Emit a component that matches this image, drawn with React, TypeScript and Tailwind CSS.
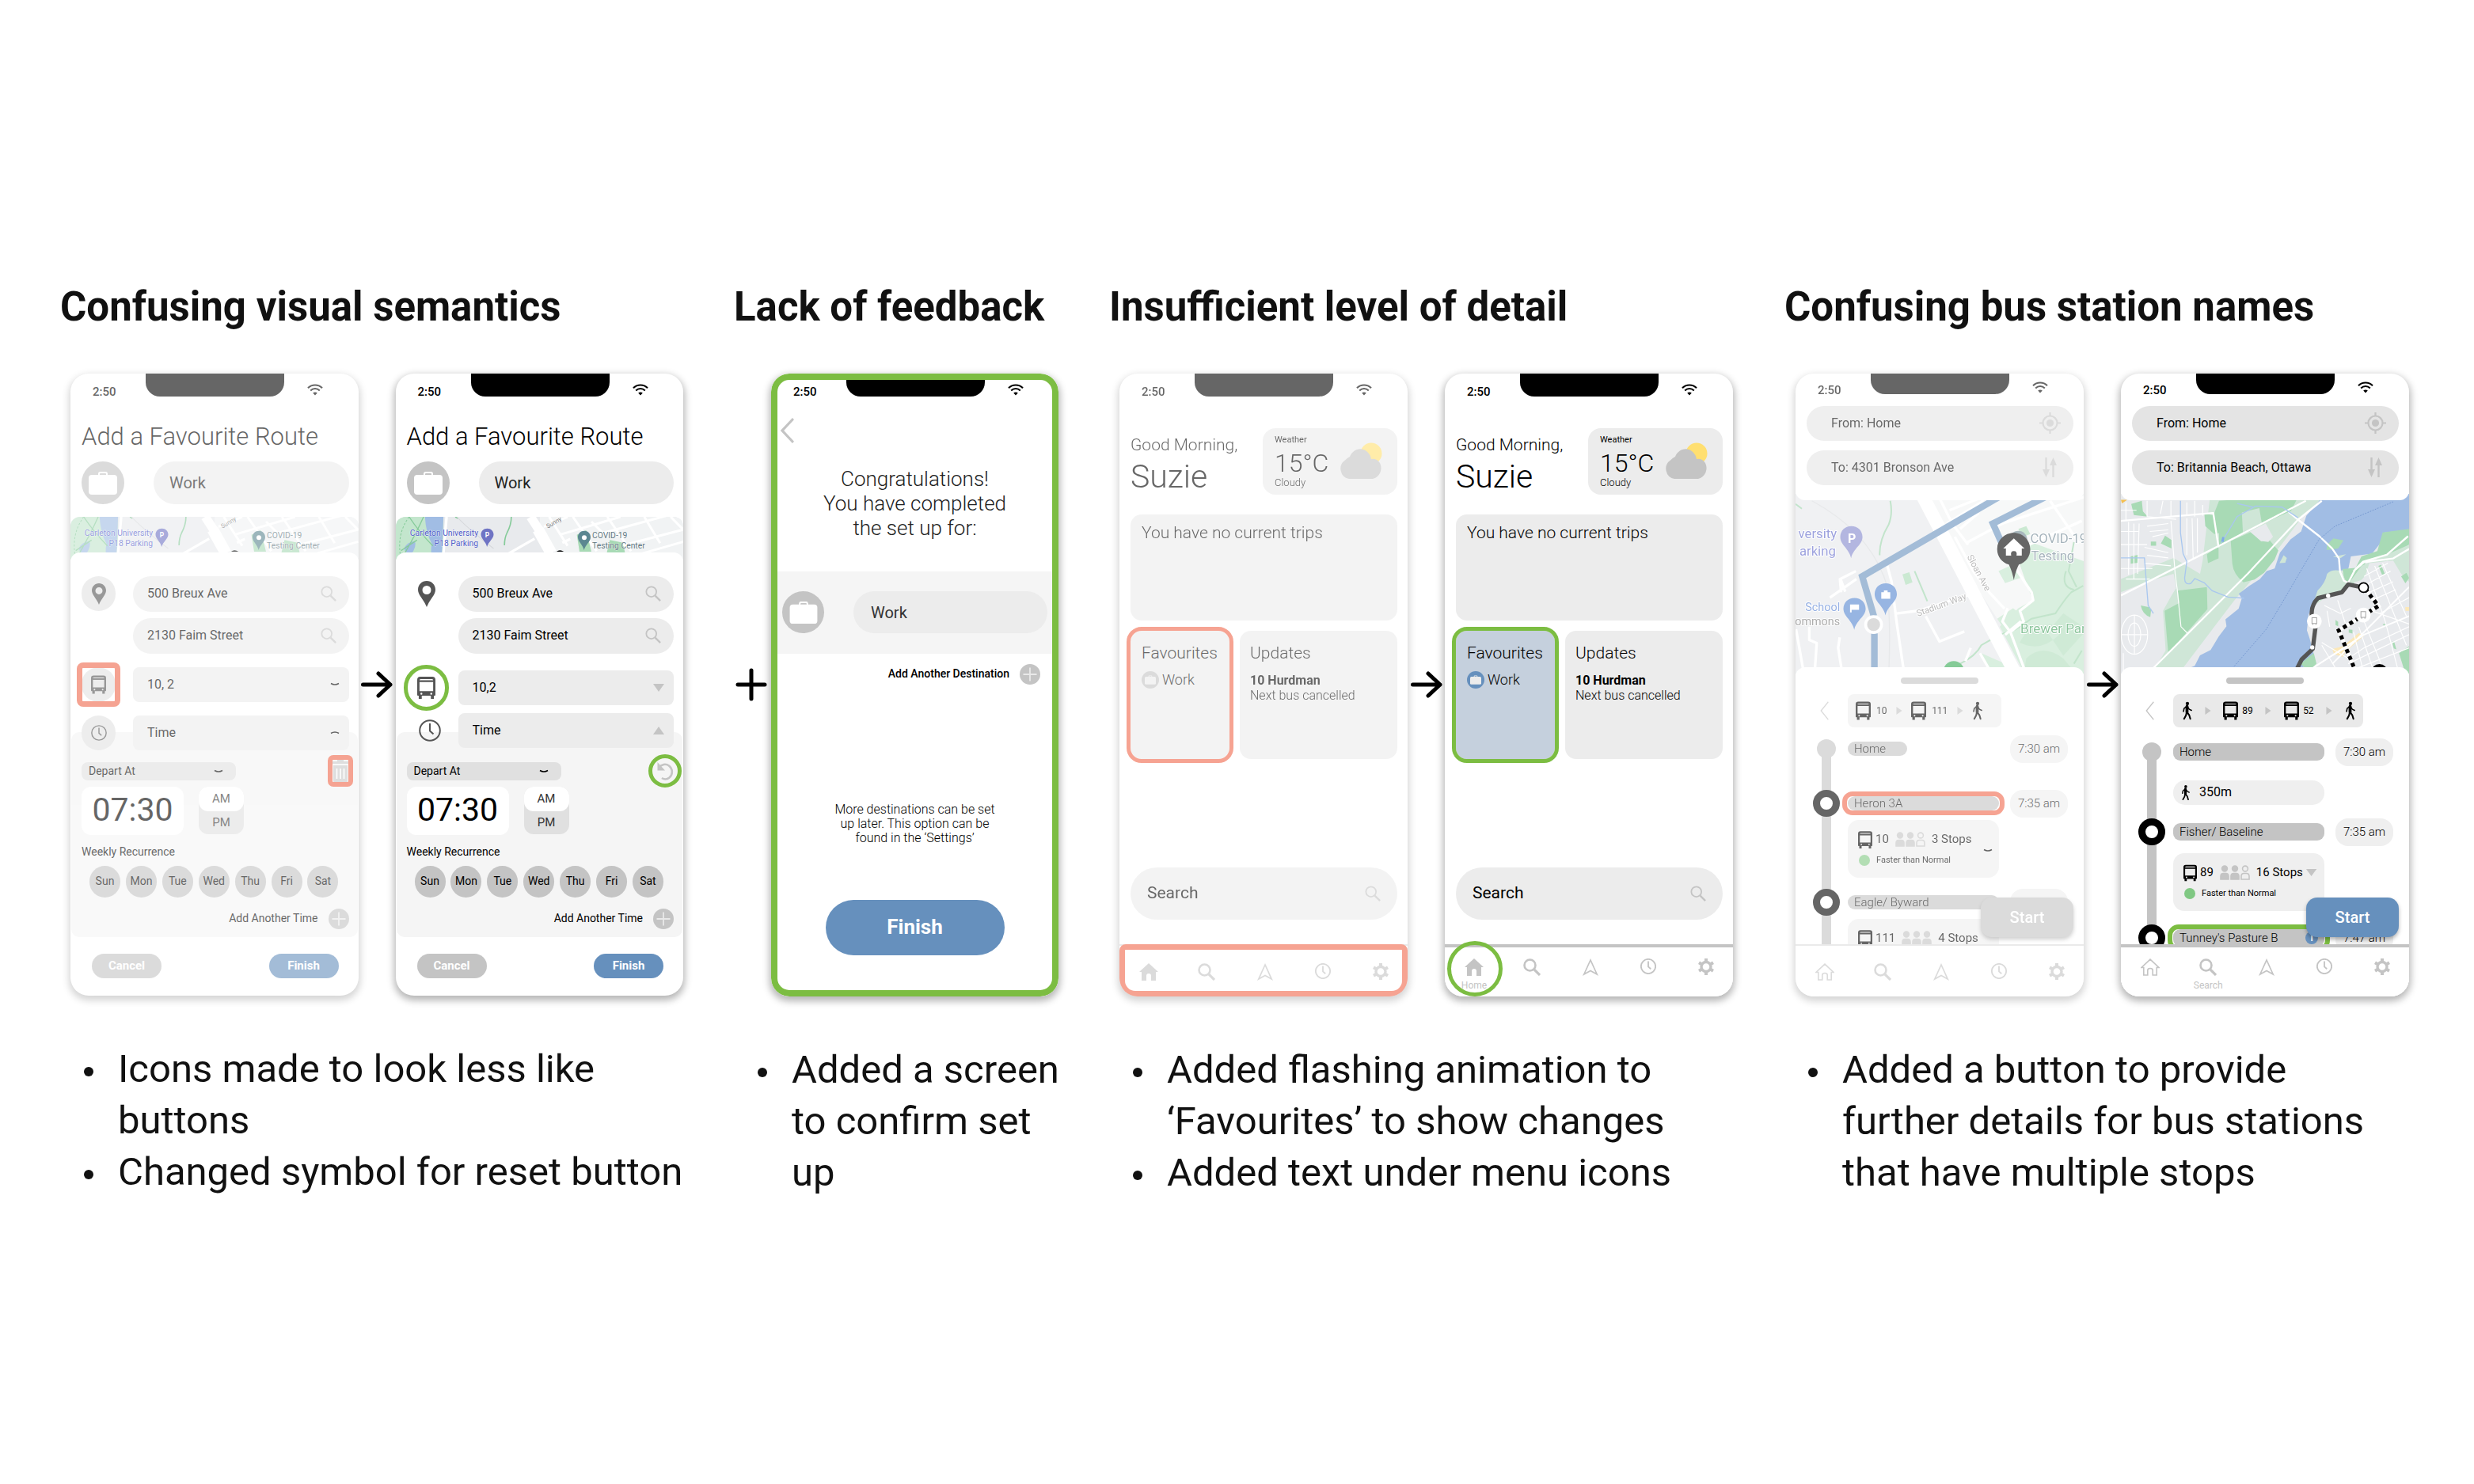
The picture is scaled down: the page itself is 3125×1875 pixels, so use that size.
import type { ReactNode } from "react";

/* ---------- icons ---------- */

function Wifi() {
  return (
    <svg className="h-[15px] w-[20px]" viewBox="0 0 20 15" fill="none" stroke="currentColor" strokeWidth="2.1">
      <path d="M1 5.2C6 .2 14 .2 19 5.2" />
      <path d="M4.2 8.4c3.3-3.2 8.3-3.2 11.6 0" />
      <path d="M10 14.6 7.2 11.6c1.6-1.5 4-1.5 5.6 0Z" fill="currentColor" stroke="none" />
    </svg>
  );
}

function Briefcase({ className }: { className: string }) {
  return (
    <svg className={className} viewBox="0 0 36 30">
      <path d="M12 6V3.5Q12 1 14.500 1h7Q24 1 24 3.500V6h-2V4q0-1-1-1h-6q-1 0-1 1v2Z" fill="currentColor" />
      <rect x="0" y="5" width="36" height="25" rx="4" fill="currentColor" />
    </svg>
  );
}

function SearchIcon({ className, thick = 2 }: { className: string; thick?: number }) {
  return (
    <svg className={className} viewBox="0 0 22 22" fill="none" stroke="currentColor">
      <circle cx="8.5" cy="8.500" r="7" strokeWidth={thick} />
      <path d="M13.800 13.800 21 21" strokeWidth={thick + 0.6} />
    </svg>
  );
}

function Pin({ className }: { className: string }) {
  return (
    <svg className={className} viewBox="0 0 22 33">
      <path
        fillRule="evenodd"
        fill="currentColor"
        d="M11 0C4.800 0 0 4.900 0 11c0 7 7 12 11 22 4-10 11-15 11-22C22 4.900 17.200 0 11 0Zm0 6a5.500 5.500 0 1 1 0 11 5.500 5.500 0 0 1 0-11Z"
      />
    </svg>
  );
}

function Bus({ className }: { className: string }) {
  return (
    <svg className={className} viewBox="0 0 24 29">
      <path
        fillRule="evenodd"
        fill="currentColor"
        d="M4 0h16q4 0 4 4v20q0 1-1 1h-1v4h-4v-4H6v4H2v-4H1q-1 0-1-1V4q0-4 4-4Zm1 3Q3 3 3 4.500h18Q21 3 19 3ZM3 7v12h18V7Zm2.500 14a1.300 1.300 0 1 0 0 2.600 1.300 1.300 0 0 0 0-2.600Zm13 0a1.300 1.300 0 1 0 0 2.600 1.300 1.300 0 0 0 0-2.600Z"
      />
    </svg>
  );
}

function Clock({ className, thick = 2 }: { className: string; thick?: number }) {
  return (
    <svg className={className} viewBox="0 0 28 28" fill="none" stroke="currentColor" strokeWidth={thick}>
      <circle cx="14" cy="14" r="12.800" />
      <path d="M14 5v9.500l4.500 4" />
    </svg>
  );
}

function Trash() {
  return (
    <svg className="h-[30px] w-[22px] text-[#c9c9c9]" viewBox="0 0 22 30">
      <path d="M1 3h6V1h8v2h6v3H1ZM2 8h18v19q0 3-3 3H5q-3 0-3-3Z" fill="currentColor" />
      <path d="M6.500 12v13M11 12v13M15.500 12v13" stroke="#fff" strokeWidth="1.600" />
    </svg>
  );
}

function Reset() {
  return (
    <svg className="h-[24px] w-[22px] text-[#c4c4c4]" viewBox="0 0 22 24" fill="none">
      <path d="M3 8c3.500-4.500 9-5.500 13-2.500 5 4 5 11 .5 15-3 2.500-6.500 2.500-9.500.5" stroke="currentColor" strokeWidth="2.600" />
      <path d="M1.500 1v10.500H11Z" fill="currentColor" />
    </svg>
  );
}

function ChevronLeft({ className, thick = 2 }: { className: string; thick?: number }) {
  return (
    <svg className={className} viewBox="0 0 17 30" preserveAspectRatio="none" fill="none" stroke="currentColor" strokeWidth={thick}>
      <path d="M16 1 2 15l14 14" />
    </svg>
  );
}

function Caret({ up = false }: { up?: boolean }) {
  return (
    <svg className="h-[5px] w-[12px]" viewBox="0 0 12 5" fill="none" stroke="currentColor" strokeWidth="1.500">
      <path d={up ? "M1 3.500Q6 .5 11 3.500" : "M1 1.500Q6 4.500 11 1.500"} />
    </svg>
  );
}

function Triangle({ dir, className }: { dir: "up" | "down" | "right"; className: string }) {
  const d = dir === "up" ? "M7 0 14 11H0Z" : dir === "down" ? "M0 0h14L7 11Z" : "M2 0v11l10-5.500Z";
  return (
    <svg className={className} viewBox="0 0 14 11" preserveAspectRatio="none">
      <path d={d} fill="currentColor" />
    </svg>
  );
}

function Walker({ className }: { className: string }) {
  return (
    <svg className={className} viewBox="0 0 14 24" fill="none" stroke="currentColor" strokeLinecap="round" strokeLinejoin="round">
      <circle cx="7.500" cy="2.300" r="2.300" fill="currentColor" stroke="none" />
      <path d="M7 6v8" strokeWidth="4" />
      <path d="M7.500 14.500 10 18l1.500 5M6.500 14.500 5.500 18.500 3 23" strokeWidth="2.200" />
      <path d="M6 6.500 3 9l-.8 4M8 7l2 3 3 1.500" strokeWidth="1.700" />
    </svg>
  );
}

function Person({ filled = true }: { filled?: boolean }) {
  return (
    <svg className="h-[19px] w-[12px] text-[#c4c4c4]" viewBox="0 0 12 19" fill={filled ? "currentColor" : "none"} stroke="currentColor" strokeWidth="1.600">
      <circle cx="6" cy="4.500" r="3.400" />
      <path d="M1 18v-4q0-3.500 3.500-3.500h3Q11 10.500 11 14v4Z" />
    </svg>
  );
}

function Plus() {
  return (
    <svg className="h-[26px] w-[26px]" viewBox="0 0 26 26">
      <circle cx="13" cy="13" r="13" fill="#c4c4c4" />
      <path d="M13 4.500v17M4.500 13h17" stroke="#e9e9e9" strokeWidth="1.800" />
    </svg>
  );
}

function Target() {
  return (
    <svg className="h-[27px] w-[27px] text-[#c4c4c4]" viewBox="0 0 27 27" fill="none" stroke="currentColor" strokeWidth="2.200">
      <circle cx="13.500" cy="13.500" r="9" />
      <circle cx="13.500" cy="13.500" r="4.600" fill="currentColor" stroke="none" />
      <path d="M13.500 0v5M13.500 22v5M0 13.500h5M22 13.500h5" />
    </svg>
  );
}

function Swap() {
  return (
    <svg className="mr-[5px] h-[25px] w-[18px] text-[#c4c4c4]" viewBox="0 0 18 25">
      <path d="M3.300 0h2.400v15H9L4.500 25 0 15h3.300ZM12.300 25h2.400V10H18L13.500 0 9 10h3.300Z" fill="currentColor" />
    </svg>
  );
}

function HomeIcon({ filled }: { filled: boolean }) {
  return filled ? (
    <svg className="h-[22px] w-[24px]" viewBox="0 0 24 22">
      <path d="M12 0 24 11h-3v11h-6v-6q0-3-3-3t-3 3v6H3V11H0Z" fill="currentColor" />
    </svg>
  ) : (
    <svg className="h-[22px] w-[24px]" viewBox="0 0 24 22" fill="none" stroke="currentColor" strokeWidth="1.600">
      <path d="M12 1.200 1 11.500h2.800V21h5v-6q0-2.500 3.200-2.500t3.200 2.500v6h5v-9.500H23Z" />
    </svg>
  );
}

function NavArrow() {
  return (
    <svg className="h-[22px] w-[20px]" viewBox="0 0 20 22" fill="none" stroke="currentColor" strokeWidth="1.700">
      <path d="M10 2 1.800 20 10 15.500 18.200 20Z" />
    </svg>
  );
}

function Gear() {
  return (
    <svg className="h-[21px] w-[20px]" viewBox="0 0 20 21" fill="none" stroke="currentColor">
      <circle cx="10" cy="10.500" r="6" strokeWidth="3.400" />
      <path d="M10 0v4M10 17v4M1 5.300l3.300 1.900M15.700 13.800l3.300 1.900M1 15.700l3.300-1.900M15.700 7.200 19 5.300" strokeWidth="4" />
    </svg>
  );
}

function WeatherIcon() {
  return (
    <svg className="h-[46px] w-[55px]" viewBox="0 0 55 46">
      <circle cx="41" cy="14" r="13.500" fill="#ffdf70" />
      <path d="M13 46a13 13 0 0 1-5-23.500A18 17 0 0 1 14 18C17 10 27 5 35 11q5 4 6 10 7-1 11 5a14 14 0 0 1-9 20Z" fill="#c4c4c4" />
    </svg>
  );
}

function ArrowRight() {
  return (
    <div className="flex w-[47px] shrink-0 items-center justify-center">
      <svg className="h-[34px] w-[40px]" viewBox="0 0 40 34" fill="none" stroke="#000" strokeWidth="5" strokeLinecap="round" strokeLinejoin="round">
        <path d="M2.500 17H37M22 3l15 14-15 14" />
      </svg>
    </div>
  );
}

/* ---------- maps ---------- */

function StripMap() {
  return (
    <svg className="block h-[54px] w-full rounded-t-[12px]" viewBox="20 42 1089 162" preserveAspectRatio="none" aria-hidden="true">
      <path fill="#e8eaed" d="M0 0h1128v220H0z" />
      <path fill="#c3e6cd" d="M20 42h180v162H20z" />
      <path fill="#a1bde4" d="M130 42h70l-6 162h-36q-8-30-2-60-22-40-26-102ZM52 160q10-22 40-26 8 20-14 50-26-4-26-24Z" />
      <path fill="none" stroke="#86cb9a" strokeWidth="4" d="M70 42q40 60 90 110M125 42Q95 110 40 204M100 130l-60 40" />
      <path fill="none" stroke="#86cb9a" strokeWidth="3" strokeDasharray="8 6" d="M70 42Q20 110 40 204" />
      <path fill="none" stroke="#86cb9a" strokeWidth="5" d="M457 42q0 30-16 60-10 20-10 48M245 42l10 6" />
      <path fill="#f1f3f4" d="M565 42h544v162H640l-75-100Z" />
      <path fill="#a8dab5" d="M705 110 740 92l20 82h-45ZM830 130l50 10 12 64h-80Z" />
      <path fill="none" stroke="#d5d7da" strokeWidth="3" d="M250 42q60 60 140 120" />
      <path fill="none" stroke="#fff" strokeWidth="10" d="M212 42l-14 162M545 125l-140 80M650 140l30-14" />
      <path fill="none" stroke="#fff" strokeWidth="34" d="m530 42 40 62" />
      <path fill="none" stroke="#fff" strokeWidth="44" d="m558 90 50 90" />
      <path
        fill="none"
        stroke="#fff"
        strokeWidth="9"
        d="m580 80 90-38M640 110l230-68M600 42l70 110M690 42l90 130M760 60l60 60M820 42l90 130M780 110 1109 20M880 150l229-60M960 42l60 100M1060 42l49 50M920 190l189-54"
      />
      <path fill="#6f74c4" d="M366 86c-14 0-24 10-24 23 0 17 18 26 23 47 6-21 25-30 25-47 0-13-10-23-24-23Z" />
      <text x="366" y="119" textAnchor="middle" fontSize="25" fontWeight="700" fill="#fff">P</text>
      <path fill="#5b8791" d="M733 95c-14 0-24 10-24 24 0 18 18 26 23 49 6-23 25-31 25-49 0-14-10-24-24-24Z" />
      <circle cx="733" cy="121" r="9" fill="#fff" />
      <g fontSize="31" stroke="#fff" strokeWidth="2" paintOrder="stroke">
        <text x="332" y="113" textAnchor="end" fill="#4f5bc8">Carleton University</text>
        <text x="332" y="152" textAnchor="end" fill="#4f5bc8">P18 Parking</text>
        <text x="763" y="122" fill="#5f7781">COVID-19</text>
        <text x="763" y="161" fill="#5f7781">Testing Center</text>
      </g>
      <text x="595" y="86" fontSize="23" fill="#777" transform="rotate(-30 595 86)">Sunny</text>
      <path fill="#000" d="M628 174q12-10 28 0Z" />
    </svg>
  );
}

function StreetMap() {
  return (
    <svg className="block h-[227px] w-full" viewBox="18 -3 1089 681" preserveAspectRatio="xMidYMid slice" aria-hidden="true">
      <path fill="#e6e8eb" d="M0-10h1128v700H0z" />
      <path fill="#f2f4f4" d="M470-10h658v400L860 560 780 470Z" />
      <path fill="#c0e4ca" d="m905 180 223 80v430H890L790 500l70-70 54-30-40-110-20-60Z" />
      <path fill="#c0e4ca" d="m785 290 55-25 30 50-60 20ZM720 600l90 40 20 40h-80ZM780 470l60-40 40 30-60 70Z" />
      <path fill="#a8dab5" d="M865 560q80 40 150-30l-30-40-90 20ZM1030 450l90 60-90 100-60-90ZM890 620q60-60 140 0l50 60H880Z" opacity=".7" />
      <path fill="#a8dab5" d="m422 302 26-8 12 38-26 10ZM860 130l30-10 15 30-30 12Z" />
      <path fill="none" stroke="#d8dadd" strokeWidth="4" d="M80 24q220 120 280 310 20 120 10 350" />
      <g fill="none" stroke="#9ad3a9" strokeWidth="6">
        <path d="M376 24q10 50-6 90-36 60-34 116M468 290l48 114M18 36l24 18M640 640q60-30 80-70l70-40 60-20 60-40 90-20q40-60 60-80l45-25M1070 180l-20 110 30 60M1040 290q-20 60 30 70M1100 590l-30 50" />
      </g>
      <g fill="none" stroke="#fff" strokeWidth="10" strokeLinejoin="round">
        <path d="M365 270l16 60 20 160 28 190M20 510l30 170M148 390l100-70M190 370l-4-50 60-30M188 320l18 48M400 450l80-10 200-62M510 460l52 96 94-38M70 500v50l28 12-8 118M185 540l-6 40 16 100" />
        <path d="M600 60l150-60M660 185l140-75 310-100M590 110 720 30 740 0M560 10l50 100 60 80M900 190l200-90M980 24l110 160M640 130l70-60M680 580l-20 50M715 600l40 70" />
        <path d="M620 160 690 290l60 80 58 62M850 280l60 90 6 30-50 40 14 40-50 40-30-40 20-50M870 480l-60 50M830 520l60 160" />
      </g>
      <path d="M490-10 850 680" stroke="#fff" strokeWidth="50" />
      <g fill="none" stroke="#6690bd" strokeWidth="25">
        <path d="M800 2 270 310l44 150M316 525v160M990-4 764 110l40 90" />
      </g>
      <circle cx="313" cy="492" r="30" fill="#c4c4c4" stroke="#fff" strokeWidth="11" />
      <path fill="#8186cc" d="M229 120c-24 0-42 17-42 41 0 30 34 44 41 80 7-36 43-50 43-80 0-24-18-41-42-41Z" />
      <text x="231" y="184" textAnchor="middle" fontSize="48" fontWeight="700" fill="#fff">P</text>
      <path fill="#5384cf" d="M359 336c-24 0-42 17-42 41 0 30 34 44 41 80 7-36 43-50 43-80 0-24-18-41-42-41ZM241 391c-24 0-42 17-42 41 0 30 34 44 41 80 7-36 43-50 43-80 0-24-18-41-42-41Z" />
      <path fill="#fff" d="M342 370h10v-7h14v7h10v24h-34ZM224 416h34v20h-28v10h-6Z" />
      <circle cx="616" cy="670" r="40" fill="#34a853" />
      <circle cx="860" cy="172" r="34" fill="#6f8791" />
      <path d="M843 145c-35 0-63 27-63 62 0 28 18 50 44 58 8 16 14 34 19 58 5-24 11-42 19-58 26-8 43-30 43-58 0-35-28-62-62-62Z" fill="#000" />
      <path d="m843 166 40 38h-10v27h-20q4-17-10-17t-10 17h-20v-27h-10Z" fill="#fff" />
      <g stroke="#fff" strokeWidth="6" strokeLinejoin="round" paintOrder="stroke">
        <g fontSize="50" fill="#5c64c8">
          <text x="174" y="165" textAnchor="end">versity</text>
          <text x="170" y="230" textAnchor="end">arking</text>
        </g>
        <g fontSize="50" fill="#6b8290">
          <text x="905" y="184">COVID-19</text>
          <text x="908" y="250">Testing</text>
        </g>
        <text x="186" y="442" textAnchor="end" fontSize="43" fill="#4f7bd0">School</text>
        <text x="186" y="494" textAnchor="end" fontSize="43" fill="#777">ommons</text>
        <text x="868" y="524" fontSize="51" fill="#42a05d">Brewer Park</text>
        <g fontSize="34" fill="#8d8d8d">
          <text x="666" y="236" transform="rotate(62 666 236)">Sloan Ave</text>
          <text x="480" y="462" transform="rotate(-20 480 462)">Stadium Way</text>
        </g>
      </g>
    </svg>
  );
}

function RiverMap() {
  return (
    <svg className="block h-[227px] w-full" viewBox="21 -3 1089 681" preserveAspectRatio="xMidYMid slice" aria-hidden="true">
      <path fill="#e8eaed" d="M0-10h1128v700H0z" />
      <path fill="#cfe6d7" d="M360-10h450l-100 90-90 120-170 200L230 690H130l60-100-10-150 50-90-10-50-100 30-100 40v-50l200-80 100 60 10-50Z" />
      <path fill="#a8dab5" d="M392 24 370 80l-34-10 4 50 34 30 18-4v46l60-30 30-20-4-74 66-16 10 60 110-50 30-60ZM436 176l76-34 40 36 30-6 34 40-14 34-40 50-36 26-42 10q-38-30-42-70ZM346 226l44-30v46l-40 18ZM236 364l110-14 2 84-80 90L200 600l-14-160 56-30ZM60 36l40-12 4 40 18 20-52-6ZM172 186l16-30 24 16v32ZM134 178h20v16h-20ZM58 234l28-6v30l-28 4ZM96 420l40 8-4 36q-30-10-36-44Z" />
      <path fill="#e8eaed" d="m508 140 60-30 28 50-18 20-28-4ZM150 350l80 4-40 60-60 20Z" />
      <path
        fill="#a1bde4"
        d="M800-10h310v144l-90 10-10 30-40 50-80 10-10 50-70 10-20 50-30 50-30 60-6 60 10 30 16 60-20 50-40 40H220l30-26 50-20 20-40 40-20 30-50 30-40-4-26 50-40 12-40-12-16 40-30 40-26 26-30 30-10 20-60 40-50 40-30 20-60Z"
      />
      <path fill="#a8dab5" d="m800 190 24-24 38 8-20 30-44 6ZM930 234l60-20 20-70 100-14v60l-60 40-100 20-20 40-30 46-34-10-8-44 50-4Z" />
      <path fill="#cfe6d7" d="M800 300q20-20 54-10l20 44-20 40-50 10-60 40 20-60q30-30 36-64ZM930 270l90-40 90-40v160l-60-100-90 10-20 60-60 20ZM620 260l16-30 12 10-6 18ZM822 236l50-10-20 14Z" />
      <path fill="#e8eaed" d="m770 420 40-30 80-20 60-70 10-30 70-20 80 80v350H690l60-80 16-80Z" />
      <path fill="#a8dab5" d="m994 270 10-4 14 34-10 4ZM882 510l14 2v14l-14-4ZM1046 556l8 2 8 28-10-4ZM1072 600l38-26v104l-20-20ZM832 474l10 8v16l-10-4ZM1080 310l20-14 10 20-14 20ZM700 640l50-40 10 40-30 30ZM1010 490h12l-6 8Z" />
      <path fill="#fce8b8" d="m820 584 40-10 60-50 20 10-70 60-10 20-34-10ZM1096 426h14v14h-14Z" />
      <g fill="none" stroke="#fff" strokeWidth="3.500">
        <path d="M40 30v70M120 24v60l110 10M20 60h60M210 24v60M180 24l-10 50M270 30v50M300 24v60M330 40v40M50 104v200M70 110v210M90 110l-6 190M20 190h100M20 140h70M120 120l80-10M130 140l70-6M140 160l60-14M110 200l90 20M120 230l80 10M110 260l100 10M270 90v140M290 90l4 150M310 90v130M20 280h120M40 320h90" />
        <ellipse cx="72" cy="530" rx="50" ry="74" />
        <ellipse cx="72" cy="530" rx="24" ry="44" />
        <path d="M72 456v148M22 530h100M30 600v90M210 100l16 200 8 60 14 140 26 26" />
        <path d="M950 280l70 200 50 190M980 270l80 200 40 100M1010 260l90 200M940 310l90-50M950 340l90-50M960 370l90-40M970 400l90-40M940 430l170 60M790 420l60 30 40-20M800 440l10 60M840 400l30 90M780 560l100 60 60-40 170-80M770 640l100-60M840 670l-60-100M940 680l-40-160M980 680l-60-180M1020 680l-80-200M880 640l230-110M880 670l230-90M1000 450l110-60" />
      </g>
      <g fill="none" stroke="#fff" strokeWidth="8" strokeLinejoin="round">
        <path strokeWidth="7" d="M21 382 400 190 720 24M140 660 500 300 690 96 780 24M655 66l36 30 80 62 48 46 26 38 4 50 14 34 20 10M880 334l26-50 30-30 90-26 80-70M900 290l40-34 110-14 60-36M20 100l350-30 20 130" />
        <path strokeWidth="6" d="M740 660l200-130 170-70M820 640l290-290" />
      </g>
      <g fill="none" stroke="#a9c7ef" strokeWidth="4">
        <path d="M246 24v120l10 80 14 30-8 60q-2 30 24 22l14-18 36 16 30 30 60 24 60 4M400 184l60-100 70-40 100 4 60 40M460 34l60 14M20 240h90l14 180 20 30" />
      </g>
      <path d="M404 160l8 2-2 18-10-2Z" fill="#7fa9e8" />
      <path d="M1050 28 830 120l-60 50-140 240-60 100-130 150" fill="none" stroke="#6b8fcb" strokeWidth="2.500" strokeDasharray="5 5" />
      <path d="M21 20h24l-20 14Z" fill="#f4bf4f" />
      <path d="M938 352l-58-12-24 30-50 12-40 10q-26 26-24 62l14 50-10 80-42 40-18 36" fill="none" stroke="#555" strokeWidth="16" strokeLinejoin="round" />
      <path d="M944 356l50 66-150 92 62 150" fill="none" stroke="#fff" strokeWidth="15" />
      <path d="M944 356l50 66-150 92 62 150" fill="none" stroke="#000" strokeWidth="15" strokeDasharray="15 13" />
      <circle cx="938" cy="352" r="18" fill="#fff" stroke="#000" strokeWidth="5" />
      <g fill="#fff">
        <circle cx="804" cy="383" r="8" />
        <circle cx="744" cy="578" r="8" />
        <circle cx="752" cy="479" r="28" />
        <circle cx="937" cy="456" r="28" />
      </g>
      <g fill="none" stroke="#a5a5a5" strokeWidth="3">
        <path d="M743 466h18v22h-18ZM746 488v5M758 488v5M928 443h18v22h-18ZM931 465v5M943 465v5" />
      </g>
      <circle cx="998" cy="672" r="31" fill="#000" />
    </svg>
  );
}

/* ---------- device frame ---------- */

function Phone({ faded = false, compact = false, children }: { faded?: boolean; compact?: boolean; children: ReactNode }) {
  return (
    <div
      className={
        "relative flex min-w-0 flex-1 flex-col overflow-hidden rounded-[23px] bg-white " +
        (faded
          ? "shadow-[0_4px_10px_2px_rgba(0,0,0,0.17)]"
          : "shadow-[0_4px_10px_2px_rgba(0,0,0,0.29)]")
      }
    >
      <div className={"flex flex-1 flex-col text-black " + (faded ? "opacity-60" : "")}>
        <div className="flex h-[32px] items-start pl-[28px] text-[15px] font-medium leading-[18px]">
          <span className={"w-[67px] " + (compact ? "mt-[12px]" : "mt-[14px]")}>2:50</span>
          <span className={"mr-[29px] w-[175px] rounded-b-[18px] bg-black " + (compact ? "h-[26px]" : "h-[29px]")} />
          <span className={compact ? "mt-[10px]" : "mt-[13px]"}>
            <Wifi />
          </span>
        </div>
        {children}
      </div>
    </div>
  );
}

function Field({ label, value, icon, className }: { label: string; value: string; icon?: ReactNode; className: string }) {
  return (
    <label className={"flex min-w-0 flex-1 items-center rounded-full " + className}>
      <input aria-label={label} defaultValue={value} className="w-0 min-w-0 flex-1 bg-transparent outline-none" />
      {icon}
    </label>
  );
}

function Dropdown({ label, value, icon }: { label: string; value: string; icon: ReactNode }) {
  return (
    <label className="flex h-[44px] min-w-0 flex-1 items-center rounded-[8px] bg-[#ececec] pl-[18px] pr-[12px] text-[16px] text-black">
      <select aria-label={label} defaultValue={value} className="w-0 min-w-0 flex-1 appearance-none bg-transparent outline-none">
        <option>{value}</option>
      </select>
      {icon}
    </label>
  );
}

/* ---------- favourite route screens ---------- */

function IconCell({ before, children, ring }: { before: boolean; children: ReactNode; ring?: ReactNode }) {
  return (
    <div className={before ? "mr-[22px] w-[43px] shrink-0" : "mr-[15px] w-[50px] shrink-0"}>
      <div className={"relative mx-auto flex h-[44px] w-[43px] items-center justify-center text-[#555] " + (before ? "rounded-full bg-[#e2e2e2]" : "")}>
        {children}
        {ring}
      </div>
    </div>
  );
}

function RoutePhone({ before = false }: { before?: boolean }) {
  return (
    <Phone faded={before}>
      <h3 className="mt-[28px] pl-[14px] text-[31px] font-light leading-[40px]">Add a Favourite Route</h3>
      <div className="mt-[11px] flex gap-[37px] pl-[14px] pr-[12px]">
        <div className="flex h-[54px] w-[54px] shrink-0 items-center justify-center rounded-full bg-[#c4c4c4] text-white">
          <Briefcase className="h-[30px] w-[36px]" />
        </div>
        <Field label="Route name" value="Work" className="h-[54px] bg-[#ececec] px-[20px] text-[20px] text-[#222]" />
      </div>
      <div className="mt-[16px]">
        <StripMap />
      </div>
      <div className="relative -mt-[9px] rounded-t-[12px] bg-white pl-[14px] pr-[12px] pt-[30px] text-[16px]">
        <div className="flex items-center">
          <IconCell before={before}>
            <Pin className={before ? "h-[27px] w-[18px]" : "h-[33px] w-[22px]"} />
          </IconCell>
          <Field label="Start address" value="500 Breux Ave" className="h-[45px] bg-[#ececec] pl-[18px] pr-[16px]" icon={<SearchIcon className="h-[20px] w-[20px] text-[#c4c4c4]" />} />
        </div>
        <div className="mt-[8px] flex pl-[65px]">
          <Field label="End address" value="2130 Faim Street" className="h-[45px] bg-[#ececec] pl-[18px] pr-[16px]" icon={<SearchIcon className="h-[20px] w-[20px] text-[#c4c4c4]" />} />
        </div>
        <div className={"flex items-center " + (before ? "mt-[17px]" : "mt-[21px]")}>
          <IconCell
            before={before}
            ring={
              before ? (
                <span className="absolute -inset-[6px] rounded-[8px] border-[7px] border-[#f0674a]" />
              ) : (
                <span className="absolute -inset-[7px] rounded-full border-[5px] border-[#7cbd42]" />
              )
            }
          >
            <Bus className={before ? "h-[24px] w-[19px]" : "h-[28px] w-[23px]"} />
          </IconCell>
          <Dropdown label="Bus lines" value={before ? "10, 2" : "10,2"} icon={before ? <Caret /> : <Triangle dir="down" className="h-[10px] w-[14px] text-[#c4c4c4]" />} />
        </div>
      </div>
      <div className={"mx-px rounded-[10px] bg-[#f5f5f5] pb-[10px] pl-[13px] pr-[11px] " + (before ? "mt-[38px]" : "mt-[34px]")}>
        <div className={"relative flex items-center " + (before ? "-mt-[21px]" : "-mt-[24px]")}>
          <IconCell before={before}>
            <Clock className={before ? "h-[20px] w-[20px]" : "ml-[9px] h-[28px] w-[28px]"} />
          </IconCell>
          <Dropdown label="Time section" value="Time" icon={before ? <Caret up /> : <Triangle dir="up" className="h-[10px] w-[14px] text-[#c4c4c4]" />} />
        </div>
        <div className={"flex h-[23px] items-center justify-between " + (before ? "mt-[15px]" : "mt-[18px]")}>
          <label className="flex h-[23px] w-[195px] items-center rounded-[8px] bg-[#e0e0e0] pl-[9px] pr-[16px] text-[14px]">
            <select aria-label="Departure type" className="w-0 min-w-0 flex-1 appearance-none bg-transparent outline-none">
              <option>Depart At</option>
            </select>
            <Caret />
          </label>
          {before ? (
            <button aria-label="Delete time" className="relative flex justify-center">
              <Trash />
              <span className="absolute -inset-[5px] rounded-[7px] border-[6px] border-[#f0674a]" />
            </button>
          ) : (
            <button aria-label="Reset time" className="relative flex h-[22px] w-[22px] items-center justify-center">
              <Reset />
              <span className="absolute -inset-[10px] rounded-full border-[5px] border-[#7cbd42]" />
            </button>
          )}
        </div>
        <div className="mt-[8px] flex gap-[19px]">
          <input aria-label="Departure time" defaultValue="07:30" className="h-[61px] w-[129px] rounded-[12px] bg-white text-center text-[41px] outline-none" />
          <div className="flex h-[60px] w-[57px] flex-col rounded-[12px] bg-[#e0e0e0] text-[15px] text-[#333]">
            <button className="h-[31px] rounded-[12px] bg-white">AM</button>
            <button className="h-[29px]">PM</button>
          </div>
        </div>
        <p className="mt-[12px] text-[14px] leading-[18px]">Weekly Recurrence</p>
        <div className="mt-[9px] flex justify-between pl-[10px] pr-[13px]">
          {["Sun", "Mon", "Tue", "Wed", "Thu", "Fri", "Sat"].map((d) => (
            <button key={d} className="h-[40px] w-[39px] rounded-full bg-[#c4c4c4] text-[14px]">
              {d}
            </button>
          ))}
        </div>
        <div className="mt-[14px] flex justify-end">
          <button className="flex h-[26px] items-center gap-[13px] text-[14px]">
            Add Another Time
            <Plus />
          </button>
        </div>
      </div>
      <div className="mt-[21px] flex justify-between pb-[22px] pl-[27px] pr-[25px] text-[15px] font-bold text-white">
        <button className="h-[31px] w-[88px] rounded-full bg-[#c4c4c4]">Cancel</button>
        <button className="h-[31px] w-[88px] rounded-full bg-[#6690bd]">Finish</button>
      </div>
    </Phone>
  );
}

/* ---------- confirmation screen ---------- */

function ConfirmPhone() {
  return (
    <Phone>
      <button aria-label="Back" className="ml-[12px] mt-[24px] w-[18px] text-[#c4c4c4]">
        <ChevronLeft className="h-[32px] w-[17px]" thick={3} />
      </button>
      <p className="mt-[30px] text-center text-[26px] font-light leading-[31px] text-[#222]">
        Congratulations!
        <br />
        You have completed
        <br />
        the set up for:
      </p>
      <div className="mt-[39px] flex h-[104px] items-center gap-[37px] bg-[#f5f5f5] px-[14px]">
        <div className="flex h-[53px] w-[53px] shrink-0 items-center justify-center rounded-full bg-[#c4c4c4] text-white">
          <Briefcase className="h-[29px] w-[36px]" />
        </div>
        <Field label="Destination name" value="Work" className="h-[53px] bg-[#ececec] px-[22px] text-[20px] text-[#333]" />
      </div>
      <div className="mt-[13px] flex justify-end pr-[23px]">
        <button className="flex items-center gap-[13px] text-[14px] font-medium">
          Add Another Destination
          <Plus />
        </button>
      </div>
      <p className="mt-[149px] text-center text-[16px] font-light leading-[18px]">
        More destinations can be set
        <br />
        up later. This option can be
        <br />
        found in the ‘Settings’
      </p>
      <button className="mx-auto mb-[52px] mt-[69px] h-[70px] w-[226px] rounded-full bg-[#6690bd] text-[26px] font-bold text-white">Finish</button>
      <span className="pointer-events-none absolute inset-0 rounded-[23px] border-[8px] border-[#7cbd42]" />
    </Phone>
  );
}

/* ---------- bottom navigation ---------- */

function NavBar({ active, label, faded = false, mark }: { active: "home" | "search"; label: boolean; faded?: boolean; mark?: "red" | "green" }) {
  const items: { name: string; icon: ReactNode }[] = [
    { name: "Home", icon: <HomeIcon filled={active === "home"} /> },
    { name: "Search", icon: <SearchIcon className="h-[22px] w-[22px]" thick={2.600} /> },
    { name: "Navigate", icon: <NavArrow /> },
    { name: "History", icon: <Clock className="h-[20px] w-[20px]" thick={2.600} /> },
    { name: "Settings", icon: <Gear /> },
  ];
  return (
    <nav className={"relative mt-auto flex h-[66px] justify-between bg-white pl-[15px] pr-[12px] text-[#c4c4c4] " + (faded ? "border-t-2 border-[#dcdcdc] pt-[22px]" : "border-t-4 border-[#c4c4c4] pt-[14px]")}>
      {items.map((it) => (
        <button key={it.name} aria-label={it.name} className="flex w-[44px] flex-col items-center gap-[5px] text-[12px] leading-[14px]">
          {it.icon}
          {label && it.name.toLowerCase() === active && <span>{it.name}</span>}
        </button>
      ))}
      {mark === "red" && <span className="absolute inset-0 -top-[2px] rounded-b-[20px] rounded-t-[8px] border-[7px] border-[#f0674a]" />}
      {mark === "green" && <span className="absolute -top-[8px] left-[3px] h-[70px] w-[70px] rounded-full border-[5px] border-[#7cbd42]" />}
    </nav>
  );
}

/* ---------- home screens ---------- */

function HomePhone({ before = false }: { before?: boolean }) {
  return (
    <Phone faded={before}>
      <div className="mt-[37px] flex justify-between pl-[14px] pr-[13px]">
        <div className="pt-[8px] font-light">
          <p className="text-[21px] leading-[26px]">Good Morning,</p>
          <p className="mt-[4px] text-[41px] leading-[46px]">Suzie</p>
        </div>
        <div className="flex h-[84px] w-[170px] justify-between rounded-[16px] bg-[#ececec] pl-[15px] pr-[19px] pt-[8px]">
          <div>
            <p className="text-[11px] leading-[14px]">Weather</p>
            <p className="mt-[5px] text-[32px] font-light leading-[34px]">15°C</p>
            <p className="text-[13px] font-light leading-[15px]">Cloudy</p>
          </div>
          <span className="mt-[10px]">
            <WeatherIcon />
          </span>
        </div>
      </div>
      <section className="ml-[14px] mr-[13px] mt-[25px] h-[134px] rounded-[14px] bg-[#ececec] pl-[14px] pt-[10px] text-[21px] font-light leading-[26px]">
        You have no current trips
      </section>
      <div className="ml-[14px] mr-[13px] mt-[13px] flex gap-[13px]">
        <section className={"relative h-[162px] w-[125px] rounded-[14px] pl-[14px] pt-[15px] " + (before ? "bg-[#ececec]" : "bg-[#c5d0dd]")}>
          <h3 className="text-[21px] font-light leading-[26px]">Favourites</h3>
          <button className="mt-[8px] flex items-center gap-[4px] text-[18px] font-light leading-[26px]">
            <span className={"flex h-[22px] w-[22px] items-center justify-center rounded-full text-[#ececec] " + (before ? "bg-[#c4c4c4]" : "bg-[#6690bd]")}>
              <Briefcase className="h-[12px] w-[14px]" />
            </span>
            Work
          </button>
          <span className={"absolute -inset-[5px] rounded-[19px] border-[5px] " + (before ? "border-[#f0674a]" : "border-[#7cbd42]")} />
        </section>
        <section className="h-[162px] flex-1 rounded-[14px] bg-[#ececec] pl-[13px] pt-[15px]">
          <h3 className="text-[21px] font-light leading-[26px]">Updates</h3>
          <p className="mt-[12px] text-[16px] font-bold leading-[19px]">10 Hurdman</p>
          <p className="text-[16px] font-light leading-[19px]">Next bus cancelled</p>
        </section>
      </div>
      <div className="mb-[31px] ml-[14px] mr-[13px] mt-[137px] flex">
        <Field label="Search" value="Search" className="h-[66px] bg-[#ececec] px-[21px] text-[21px]" icon={<SearchIcon className="h-[20px] w-[20px] text-[#c4c4c4]" />} />
      </div>
      <NavBar active="home" label={!before} faded={before} mark={before ? "red" : "green"} />
    </Phone>
  );
}

/* ---------- trip screens ---------- */

function Dot({ ring = false }: { ring?: boolean }) {
  return (
    <span className="flex w-[66px] shrink-0 justify-center pr-[12px]">
      <span className={ring ? "ml-[24px] h-[34px] w-[34px] shrink-0 rounded-full border-[9px] border-black bg-white" : "ml-[24px] h-[24px] w-[24px] shrink-0 rounded-full bg-[#c4c4c4]"} />
    </span>
  );
}

function TimePill({ children }: { children: ReactNode }) {
  return <span className="ml-[14px] flex h-[35px] w-[73px] shrink-0 items-center justify-center rounded-[16px] bg-[#efefef] text-[15px] font-light">{children}</span>;
}

function Stop({ name, time, ring = false, slim = false, short = false, className, children }: { name: string; time: string; ring?: boolean; slim?: boolean; short?: boolean; className: string; children?: ReactNode }) {
  return (
    <div className={"relative flex h-[35px] items-center " + className}>
      <Dot ring={ring} />
      <div className="w-[191px] shrink-0">
        <div className={"relative flex items-center rounded-[9px] bg-[#c4c4c4] pl-[8px] text-[15px] font-light " + (slim ? "h-[18px] " : "h-[22px] ") + (short ? "w-[75px]" : "w-full")}>
          {name}
          {children}
        </div>
      </div>
      <TimePill>{time}</TimePill>
    </div>
  );
}

function BusCard({ line, stops, before = false, busy = false, className }: { line: string; stops: string; before?: boolean; busy?: boolean; className: string }) {
  return (
    <div className={"relative ml-[66px] h-[73px] w-[191px] rounded-[14px] bg-[#efefef] pl-[13px] pr-[10px] pt-[13px] " + className}>
      <div className="flex h-[24px] items-center gap-[4px] text-[15px]">
        <Bus className="h-[22px] w-[18px]" />
        <span>{line}</span>
        <span className="mx-[4px] flex gap-px">
          <Person />
          <Person />
          <Person filled={busy} />
        </span>
        <span className="whitespace-nowrap">{stops}</span>
        {!before && <Triangle dir="down" className="ml-auto h-[9px] w-[14px] text-[#c4c4c4]" />}
      </div>
      {before && !busy && (
        <span className="absolute right-[8px] top-[36px]">
          <Caret />
        </span>
      )}
      <div className="mt-[5px] flex items-center gap-[8px] text-[11px] leading-[18px]">
        <span className="ml-px h-[14px] w-[14px] rounded-full bg-[#80c883]" />
        Faster than Normal
      </div>
    </div>
  );
}

function TripPhone({ before = false }: { before?: boolean }) {
  const arrow = <Triangle dir="right" className="h-[10px] w-[10px] text-[#c4c4c4]" />;
  const bus = <Bus className="h-[24px] w-[19px]" />;
  return (
    <Phone faded={before} compact>
      <div className="relative rounded-b-[12px] bg-white pb-[19px] pl-[14px] pr-[13px] pt-[9px] text-[16px]">
        <div className="flex">
          <Field label="From" value="From: Home" className="h-[44px] bg-[#e4e4e4] pl-[31px] pr-[16px]" icon={<Target />} />
        </div>
        <div className="mt-[12px] flex">
          <Field label="To" value={before ? "To: 4301 Bronson Ave" : "To: Britannia Beach, Ottawa"} className="h-[44px] bg-[#e4e4e4] pl-[31px] pr-[16px]" icon={<Swap />} />
        </div>
      </div>
      <div className="-mt-[8px]">{before ? <StreetMap /> : <RiverMap />}</div>
      <div className="relative -mt-[8px] flex flex-1 flex-col rounded-t-[12px] bg-white pt-[13px]">
        <span className="mx-auto h-[8px] w-[98px] rounded-full bg-[#c4c4c4]" />
        <div className="mt-[13px] flex items-center pl-[31px]">
          <button aria-label="Back" className="mr-[24px] text-[#c4c4c4]">
            <ChevronLeft className="h-[24px] w-[11px]" />
          </button>
          {before ? (
            <div className="flex h-[42px] w-[194px] items-center justify-between rounded-[8px] bg-[#efefef] pl-[10px] pr-[24px] text-[12px]">
              <span className="flex items-center gap-[7px]">
                {bus} 10
              </span>
              {arrow}
              <span className="flex items-center gap-[7px]">
                {bus} 111
              </span>
              {arrow}
              <Walker className="h-[24px] w-[13px]" />
            </div>
          ) : (
            <div className="flex h-[42px] w-[240px] items-center justify-between rounded-[8px] bg-[#e9e9e9] pl-[11px] pr-[10px] text-[12px]">
              <Walker className="h-[24px] w-[13px]" />
              {arrow}
              <span className="flex items-center gap-[5px]">
                {bus} 89
              </span>
              {arrow}
              <span className="flex items-center gap-[5px]">
                {bus} 52
              </span>
              {arrow}
              <Walker className="h-[24px] w-[13px]" />
            </div>
          )}
        </div>
        <div className="relative h-[274px] overflow-hidden">
          <span className="absolute bottom-0 left-[33px] top-[30px] w-[12px] bg-[#c4c4c4]" />
          {before ? (
            <>
              <Stop name="Home" time="7:30 am" slim short className="mt-[10px]" />
              <Stop name="Heron 3A" time="7:35 am" ring slim className="mt-[34px]">
                <span className="absolute -inset-x-[7px] -inset-y-[6px] rounded-[13px] border-[6px] border-[#f0674a]" />
              </Stop>
              <BusCard line="10" stops="3 Stops" before className="mt-[3px]" />
              <Stop name="Eagle/ Byward" time="7:43 am" ring slim className="mt-[14px]" />
              <BusCard line="111" stops="4 Stops" before busy className="mt-[3px]" />
            </>
          ) : (
            <>
              <Stop name="Home" time="7:30 am" className="mt-[14px]" />
              <div className="relative ml-[66px] mt-[18px] flex h-[31px] w-[191px] items-center gap-[12px] rounded-[15px] bg-[#efefef] pl-[10px] text-[16px]">
                <Walker className="h-[19px] w-[11px]" />
                350m
              </div>
              <Stop name="Fisher/ Baseline" time="7:35 am" ring className="mt-[17px]" />
              <BusCard line="89" stops="16 Stops" className="mt-[9px]" />
              <Stop name="Tunney's Pasture B" time="7:47 am" ring className="mt-[17px]">
                <span className="ml-auto mr-[8px] flex h-[16px] w-[16px] items-center justify-center rounded-full bg-[#6690bd] text-[12px] font-bold text-white">i</span>
                <span className="absolute -inset-x-[7px] -inset-y-[6px] rounded-[14px] border-[6px] border-[#7cbd42]" />
              </Stop>
            </>
          )}
          <button
            className={
              "absolute bottom-[9px] right-[13px] h-[50px] w-[117px] rounded-[14px] text-[20px] font-medium text-white shadow-[0_3px_5px_rgba(0,0,0,0.3)] " +
              (before ? "bg-[#c4c4c4]" : "bg-[#6690bd]")
            }
          >
            Start
          </button>
        </div>
        <NavBar active="search" label={!before} faded={before} />
      </div>
    </Phone>
  );
}

/* ---------- page ---------- */

function Finding({ title, notes, children }: { title: string; notes: string[]; children: ReactNode }) {
  return (
    <section className="flex min-w-0 flex-col">
      <h2 className="whitespace-nowrap text-[51px] font-bold leading-[60px]">{title}</h2>
      <div className="mt-[54px] flex">{children}</div>
      <ul className="mt-[60px] pl-[30px] pr-[50px] text-[49px] leading-[65px]">
        {notes.map((n) => (
          <li key={n} className="flex">
            <span className="mr-[31px] mt-[30px] h-[12px] w-[12px] shrink-0 rounded-full bg-[#111]" />
            <span>{n}</span>
          </li>
        ))}
      </ul>
    </section>
  );
}

export default function App() {
  return (
    <main className="flex min-h-screen flex-col justify-center bg-white pb-[4px] pl-[76px] pr-[68px] font-['Roboto',sans-serif] text-[#111]">
      <div className="grid grid-cols-[851fr_474fr_853fr_803fr]">
        <Finding title="Confusing visual semantics" notes={["Icons made to look less like buttons", "Changed symbol for reset button"]}>
          <div className="ml-[13px] mr-[64px] flex min-w-0 flex-1">
            <RoutePhone before />
            <ArrowRight />
            <RoutePhone />
          </div>
        </Finding>
        <Finding title="Lack of feedback" notes={["Added a screen to confirm set up"]}>
          <div className="ml-[2px] mr-[64px] flex min-w-0 flex-1">
            <div className="flex w-[45px] shrink-0 items-center">
              <svg className="h-[42px] w-[40px]" viewBox="0 0 40 42" fill="none" stroke="#000" strokeWidth="5" strokeLinecap="round">
                <path d="M20 3v36M3 21h34" />
              </svg>
            </div>
            <ConfirmPhone />
          </div>
        </Finding>
        <Finding title="Insufficient level of detail" notes={["Added flashing animation to ‘Favourites’ to show changes", "Added text under menu icons"]}>
          <div className="ml-[13px] mr-[65px] flex min-w-0 flex-1">
            <HomePhone before />
            <ArrowRight />
            <HomePhone />
          </div>
        </Finding>
        <Finding title="Confusing bus station names" notes={["Added a button to provide further details for bus stations that have multiple stops"]}>
          <div className="ml-[14px] mr-[14px] flex min-w-0 flex-1">
            <TripPhone before />
            <ArrowRight />
            <TripPhone />
          </div>
        </Finding>
      </div>
    </main>
  );
}
